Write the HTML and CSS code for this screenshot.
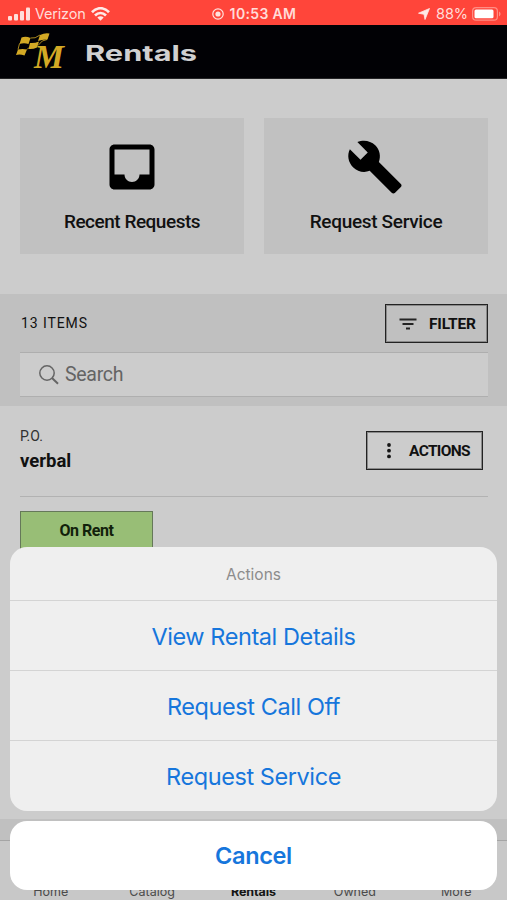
FILE: index.html
```
<!DOCTYPE html>
<html lang="en">
<head>
<meta charset="utf-8">
<title>Rentals</title>
<link rel="stylesheet" href="styles.css">
</head>
<body>
<div class="screen">
  <div class="status">
    <div class="status-left">
      <svg width="23" height="14" viewBox="0 0 23 14" fill="#ffdfdb"><rect x="0" y="9" width="4" height="4.500" rx="1"/><rect x="6" y="7" width="4" height="6.500" rx="1"/><rect x="12" y="4" width="4" height="9.500" rx="1"/><rect x="18" y="0.500" width="4" height="13" rx="1"/></svg>
      <span class="carrier">Verizon</span>
      <svg width="19" height="14" viewBox="0 0 19 14" fill="none" stroke="#ffe9e6" stroke-width="2.700"><path d="M1 5.200C6-.1 13-.1 18 5.200M4 8.500c3.400-3.300 7.600-3.300 11 0"/><path d="M9.500 13.800L6.300 10.500c2-1.600 4.400-1.600 6.400 0z" fill="#ffe9e6" stroke="none"/></svg>
    </div>
    <div class="status-mid">
      <svg width="12" height="12" viewBox="0 0 12 12"><circle cx="6" cy="6" r="5.200" fill="none" stroke="#ffe2de" stroke-width="1.200"/><circle cx="6" cy="6" r="2.600" fill="#ffe2de"/></svg>
      <span class="clock">10:53 AM</span>
    </div>
    <div class="status-right">
      <svg width="12" height="12" viewBox="0 0 12 12" fill="#ffe9e6"><path d="M11.500.5L7 11.500 6 6.300 .5 5.200z" stroke="#ffe9e6" stroke-width=".8" stroke-linejoin="round"/></svg>
      <span class="percent">88%</span>
      <svg width="29" height="14" viewBox="0 0 29 14"><rect x=".6" y=".6" width="24.800" height="12.600" rx="3.500" fill="none" stroke="#ff8e85" stroke-width="1.200"/><rect x="2.500" y="2.500" width="19" height="8.800" rx="1.500" fill="#fff"/><path d="M27 4.500c2 .8 2 4 0 4.800z" fill="#ff8e85"/></svg>
    </div>
  </div>

  <header class="header">
    <svg class="logo" width="50" height="38" viewBox="0 0 50 38">
      <g fill="#d3a925">
        <path d="M5.500 5.500q4.500-1.500 9 .5l-2 6q-4.500-1.500-9 0zM14 11q4.500.5 9-1.500l-2 6q-4 2-8.500 1.500zM24 3q5-2.500 9.500-1.500l-2 6q-4.500-.5-9.500 1.500zM2 17.500q4.500-1 9 0l-2.500 6q-4.500-1.500-8.500-.5z"/>
        <path d="M14.500 6q4.500 1 9.500-3M3.500 11.500L2 17.500M11 17.500l2-2M31 7.500q-5 0-9 6" fill="none" stroke="#d3a925" stroke-width=".8"/>
      </g>
      <text class="logo-letter" x="18" y="36" textLength="30" lengthAdjust="spacingAndGlyphs">M</text>
    </svg>
    <h1 class="title">Rentals</h1>
  </header>

  <section class="cards">
    <div class="card">
      <svg width="60" height="60" viewBox="0 0 24 24"><path d="M19 3H5c-1.100 0-2 .9-2 2v14c0 1.100.9 2 2 2h14c1.100 0 2-.9 2-2V5c0-1.100-.9-2-2-2zm0 12h-4c0 1.660-1.350 3-3 3s-3-1.340-3-3H5V5h14v10z"/></svg>
      <span class="card-label">Recent Requests</span>
    </div>
    <div class="card">
      <svg class="wrench" width="58" height="60" viewBox="0 0 24 24"><path d="M22.700 19l-9.100-9.100c.9-2.300.4-5-1.500-6.900-2-2-5-2.400-7.400-1.300L9 6 6 9 1.600 4.700C.4 7.100.9 10.100 2.900 12.100c1.900 1.900 4.600 2.400 6.900 1.500l9.100 9.100c.4.4 1 .4 1.400 0l2.300-2.300c.5-.4.5-1.100.1-1.400z"/></svg>
      <span class="card-label service">Request Service</span>
    </div>
  </section>

  <section class="tools">
    <div class="tools-row">
      <span class="count">13 ITEMS</span>
      <div class="button filter">
        <svg width="18" height="12" viewBox="0 0 18 12" stroke="#242424" stroke-width="2"><path d="M.5 1.500h17M3.500 6h11M7 10.500h4"/></svg>
        <span>FILTER</span>
      </div>
    </div>
    <div class="search">
      <svg width="20" height="20" viewBox="0 0 20 20" fill="none" stroke="#656565"><circle cx="8" cy="8" r="7.200" stroke-width="1.500"/><path d="M13 13l6 5.800" stroke-width="2"/></svg>
      <span>Search</span>
    </div>
  </section>

  <section class="order">
    <div class="order-head">
      <div class="po"><div class="po-label">P.O.</div><div class="po-value">verbal</div></div>
      <div class="button actions">
        <svg width="4" height="16" viewBox="0 0 4 16" fill="#161616"><circle cx="2" cy="2" r="1.900"/><circle cx="2" cy="7.700" r="1.900"/><circle cx="2" cy="13.400" r="1.900"/></svg>
        <span>ACTIONS</span>
      </div>
    </div>
    <div class="tag">On Rent</div>
  </section>

  <nav class="tabs">
    <span>Home</span><span>Catalog</span><span class="current">Rentals</span><span>Owned</span><span>More</span>
  </nav>
</div>

<div class="overlay">
  <div class="sheet">
    <div class="sheet-title">Actions</div>
    <div class="option">View Rental Details</div>
    <div class="option">Request Call Off</div>
    <div class="option">Request Service</div>
  </div>
  <div class="cancel">Cancel</div>
</div>
</body>
</html>
```
FILE: styles.css
```
* { box-sizing: border-box; }
body { margin: 0; font-family: Roboto, sans-serif; color: #111; }
svg { display: block; flex: none; }
.screen { width: 507px; height: 900px; overflow: hidden; background: #ccc; display: flex; flex-direction: column; }
.status { height: 25px; flex: none; background: #ff453a; color: #ffdcd8; display: grid; grid-template-columns: 1fr auto 1fr; align-items: center; padding: 2px 6px 0 8px; font: 14.5px/20px Inter, sans-serif; }
.status-left, .status-mid, .status-right { display: flex; align-items: center; }
.status-left { gap: 5px; }
.carrier { width: 51px; letter-spacing: -.2px; margin-left: -1px; }
.status-mid { gap: 6px; font-weight: 600; font-size: 14px; letter-spacing: .35px; margin-left: -1px; }
.status-right { justify-content: flex-end; gap: 6px; }
.percent { margin-right: -2px; letter-spacing: -.1px; }
.header { height: 54px; flex: none; background: #010105; display: flex; align-items: center; padding-left: 16px; border-bottom: 1px solid #242426; }
.logo { margin-bottom: 1px; overflow: visible; }
.logo-letter { font: italic bold 33px "Liberation Serif", serif; fill: #d3a925; }
.title { margin: 2px 0 0 19px; font: 700 21.5px/30px Inter, sans-serif; color: #d0d0d0; transform: scaleX(1.43); transform-origin: left; }
.cards { flex: none; height: 215px; padding: 39px 19px 40px 20px; display: grid; grid-template-columns: 1fr 1fr; gap: 20px; }
.card { background: #c1c1c1; display: flex; flex-direction: column; align-items: center; padding-top: 19px; }
.wrench { margin-right: 2px; }
.card-label { margin-top: 13px; font-size: 19px; line-height: 24px; font-weight: 500; letter-spacing: -.48px; white-space: nowrap; }
.service { letter-spacing: -.32px; }
.tools { flex: none; height: 112px; background: #c0c0c0; padding: 10px 19px 9px 20px; }
.tools-row { display: flex; justify-content: space-between; height: 39px; align-items: center; margin-bottom: 9px; }
.count { font-size: 14px; letter-spacing: .9px; padding-left: 1px; margin-top: -2px; }
.button { height: 39px; border: 1px solid #222; box-shadow: inset 0 0 0 1px #8a8a8a; display: flex; align-items: center; font-size: 15.5px; font-weight: 700; }
.filter { width: 103px; padding-left: 13px; gap: 12px; letter-spacing: -.2px; }
.search { height: 45px; border-top: 1px solid #aeaeae; border-bottom: 1px solid #afafaf; background: #ccc; display: flex; align-items: center; padding-left: 19px; gap: 6px; color: #646464; font-size: 19.5px; letter-spacing: -.3px; }
.order { flex: none; height: 413px; padding: 25px 19px 0 20px; }
.order-head { height: 66px; border-bottom: 1px solid #b2b2b2; display: flex; justify-content: space-between; align-items: flex-start; margin-bottom: 14px; }
.po { margin-top: -4px; }
.po-label { font-size: 14px; line-height: 18px; color: #303030; }
.po-value { font-size: 18.5px; line-height: 24px; font-weight: 700; margin-top: 4px; }
.actions { width: 117px; margin-right: 5px; padding-left: 20px; gap: 18px; letter-spacing: -.65px; }
.tag { width: 133px; height: 50px; border: 1px solid #657859; background: #98be76; text-align: center; font-size: 16px; line-height: 38px; font-weight: 700; letter-spacing: -.45px; color: #12220b; }
.tabs { flex: none; height: 81px; border-top: 21px solid #c0c0c0; background: #c8c8c8; box-shadow: inset 0 1px #a5a5a5; display: grid; grid-template-columns: repeat(5, 1fr); text-align: center; padding-top: 44px; font: 12.5px/16px Inter, sans-serif; color: #4b4b4b; }
.current { font-weight: 700; color: #151515; letter-spacing: -.1px; }
.overlay { position: absolute; top: 547px; left: 10px; width: 487px; font-family: Inter, sans-serif; text-align: center; }
.sheet { height: 264px; border-radius: 17px; background: #efefef; overflow: hidden; margin-bottom: 10px; }
.sheet-title { height: 54px; line-height: 55px; font-size: 15.5px; color: #8c8c8c; border-bottom: 1px solid #d4d4d4; }
.option { height: 70px; line-height: 71px; border-bottom: 1px solid #d4d4d4; font-size: 23.5px; letter-spacing: -.42px; color: #1676dc; }
.option:last-child { border: 0; }
.cancel { height: 69px; line-height: 70px; border-radius: 17px; background: #fff; color: #1676dc; font-size: 23.5px; font-weight: 600; letter-spacing: -.35px; }
```
